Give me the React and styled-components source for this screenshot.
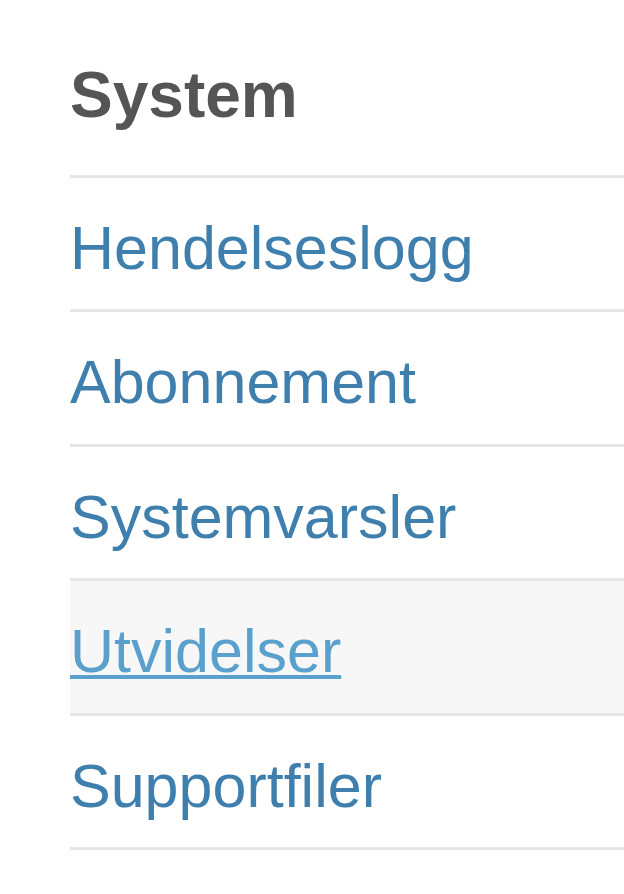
import React from 'react';
import styled, { createGlobalStyle } from 'styled-components';

const GlobalStyle = createGlobalStyle`
  html, body {
    margin: 0;
    padding: 0;
    background: #ffffff;
  }
  body {
    font-family: "Liberation Sans", Arial, Helvetica, sans-serif;
  }
`;

const Panel = styled.div`
  padding: 58px 0 0 70px;
  overflow: hidden;
`;

const Heading = styled.h2`
  margin: 0 0 43px;
  font-size: 64px;
  font-weight: 700;
  line-height: normal;
  color: #555555;
`;

const List = styled.ul`
  list-style: none;
  margin: 0;
  padding: 0;
  border-bottom: 3px solid #e6e6e6;
`;

const Item = styled.li`
  height: 131.4px;
  box-sizing: content-box;
  border-top: 3px solid #e6e6e6;
  background: ${({ active }) => (active ? '#f7f7f7' : 'transparent')};
`;

const Link = styled.a`
  display: block;
  padding-top: 35px;
  font-size: 61px;
  line-height: normal;
  color: ${({ active }) => (active ? '#5aa0cd' : '#3f7fae')};
  text-decoration: ${({ active }) => (active ? 'underline' : 'none')};
  text-decoration-thickness: 4px;
  text-underline-offset: 3px;
  cursor: pointer;
`;

const items = ['Hendelseslogg', 'Abonnement', 'Systemvarsler', 'Utvidelser', 'Supportfiler'];

const App = () => (
  <>
    <GlobalStyle />
    <Panel>
      <Heading>System</Heading>
      <List>
        {items.map(label => {
          const active = label === 'Utvidelser';
          return (
            <Item key={label} active={active}>
              <Link active={active}>{label}</Link>
            </Item>
          );
        })}
      </List>
    </Panel>
  </>
);

export default App;
